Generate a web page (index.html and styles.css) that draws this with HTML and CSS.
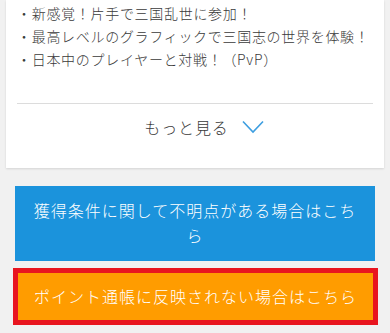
FILE: index.html
```html
<!DOCTYPE html>
<html lang="ja">
<head>
<meta charset="utf-8">
<link rel="stylesheet" href="styles.css">
</head>
<body>
<div class="page">
  <section class="card">
    <ul class="features">
      <li>・新感覚！片手で三国乱世に参加！</li>
      <li>・最高レベルのグラフィックで三国志の世界を体験！</li>
      <li>・日本中のプレイヤーと対戦！（PvP）</li>
    </ul>
    <div class="more">
      <span class="more-label">もっと見る</span>
      <svg class="chevron" width="22" height="14" viewBox="0 0 22 14"><path d="M1 1.5 L11 12 L21 1.5" fill="none" stroke="#3d9ee0" stroke-width="1.6"/></svg>
    </div>
  </section>
  <div class="actions">
    <a class="btn btn-blue">獲得条件に関して不明点がある場合はこちら</a>
    <a class="btn btn-orange">ポイント通帳に反映されない場合はこちら</a>
  </div>
</div>
</body>
</html>
```
FILE: styles.css
```css
html, body {
  margin: 0;
  padding: 0;
  background: #f1f1f1;
}
body {
  font-family: "Noto Sans CJK JP", "Noto Sans", sans-serif;
  font-weight: 300;
  color: #3a3a3a;
}
.page {
  width: 390px;
}
.card {
  margin: 0 6px;
  background: #fff;
  padding: 2px 11px 0;
  box-shadow: 0 1px 2px rgba(0,0,0,0.12);
}
.features {
  list-style: none;
  margin: 0 -4px 0 0;
  padding: 0 0 32px;
  font-size: 14px;
  letter-spacing: 0.7px;
  line-height: 23px;
}
.more {
  border-top: 1px solid #dcdcdc;
  height: 65px;
  display: flex;
  justify-content: center;
  align-items: flex-start;
  padding: 11px 0 0 18px;
  box-sizing: border-box;
  gap: 13px;
}
.more-label {
  font-size: 16px;
  line-height: 24px;
  letter-spacing: 0.9px;
  color: #3a3a3a;
}
.chevron {
  margin-top: 5px;
}
.actions {
  padding: 18px 15px 0;
  display: flex;
  flex-direction: column;
  gap: 7px;
}
.btn {
  display: block;
  text-align: center;
  color: #fff;
  font-size: 16px;
  letter-spacing: 1px;
  line-height: 25px;
  text-decoration: none;
}
.btn-blue {
  background: #1b93dc;
  padding: 12px 16px 13px;
}
.btn-orange {
  background: #ff9c00;
  border: 5px solid #e8151f;
  margin: 0 -3px 0 -2px;
  padding: 11px 6px;
}
```
